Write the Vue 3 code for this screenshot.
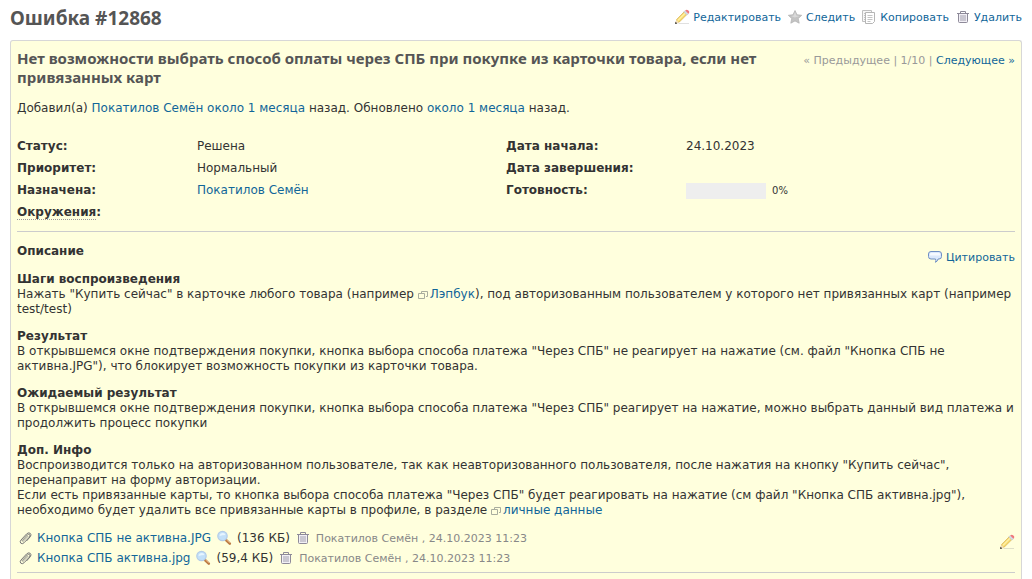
<script setup>
const attributesLeft = [
  { label: 'Статус', value: 'Решена' },
  { label: 'Приоритет', value: 'Нормальный' },
  { label: 'Назначена', value: 'Покатилов Семён', link: true },
  { label: 'Окружения', value: '', hint: true }
]
const attributesRight = [
  { label: 'Дата начала', value: '24.10.2023' },
  { label: 'Дата завершения', value: '' },
  { label: 'Готовность', progress: 0 }
]
const files = [
  { name: 'Кнопка СПБ не активна.JPG', size: '136 КБ' },
  { name: 'Кнопка СПБ активна.jpg', size: '59,4 КБ' }
]
</script>

<template>
  <svg class="symbols" width="0" height="0" aria-hidden="true">
    <symbol id="pencil" viewBox="0 0 16 16">
      <path d="M5 14h10v1H4z" fill="#999" opacity=".3" />
      <path d="M1.8 14.200 2.800 10.300 10.200 2.800l2.700 2.700L5.500 12.900z" fill="#f7dc6f" stroke="#d0a548" stroke-width=".6" />
      <path d="m4 11.400 7.200-7.200" stroke="#fff2b0" stroke-width="1.200" />
      <path d="M1.500 14.500 2.400 11l2.500 2.400z" fill="#f2dfc0" />
      <path d="m1 15 .6-2.200 1.700 1.600z" fill="#333" />
      <path d="m9.800 3 1.400-1.400 3.200 3.200L13 6.200z" fill="#d5dce6" stroke="#b3bac5" stroke-width=".4" />
      <path d="m11.200 1.600.8-.7q1-.6 2 .3l.9.900q.8 1 .1 1.900l-.6.800z" fill="#f0777c" />
    </symbol>
    <symbol id="star" viewBox="0 0 16 16">
      <path d="m8 1.500 2 4.300 4.700.5-3.500 3.200 1 4.700L8 11.900l-4.200 2.300 1-4.700-3.500-3.200L6 5.800z" fill="#c4c4c4" stroke="#b4b4b4" stroke-width=".8" />
      <path d="m8 3 1.300 3.400 3.500.5-5 1.600L4 6.900 6.700 6.400z" fill="#d9d9d9" />
    </symbol>
    <symbol id="copy" viewBox="0 0 16 16">
      <path d="M1.500 1.500h9v11h-9z" fill="#f7f7f7" stroke="#c0c0c0" />
      <path d="M3 4.500h2M3 6.500h1M3 8.500h1M3 10.500h1" stroke="#c5c5c5" />
      <path d="M4.500 3.500h9v9l-2 2h-7z" fill="#fff" stroke="#b5b5b5" />
      <path d="M6.500 6.500h5M6.500 8.500h5M6.500 10.500h5M6.500 12.500h3" stroke="#c4c4c4" />
    </symbol>
    <symbol id="trash" viewBox="0 0 16 16">
      <path d="M2 4.500h12M5.500 4V2.500h5V4" fill="none" stroke="#8e8a99" />
      <path d="M3.500 5v7.500q0 1 1 1h7q1 0 1-1V5" fill="#f2f0f6" stroke="#8e8a99" />
      <path d="M6 6v6M8 6v6M10 6v6" stroke="#9995a5" stroke-width=".9" />
    </symbol>
    <symbol id="comment" viewBox="0 0 16 16">
      <path d="M4 2.500h8q2.500 0 2.500 2.500v2.500q0 2.500-2.500 2.500h-1q0 2-2.500 3.300Q9.300 11.500 8.500 10H4q-2.500 0-2.500-2.500V5Q1.500 2.500 4 2.500z" fill="#dce9fb" stroke="#6f8fc4" />
      <path d="M4 4h8q1 0 1 1v1.500H3V5q0-1 1-1z" fill="#f6faff" />
    </symbol>
    <symbol id="clip" viewBox="0 0 16 16">
      <path d="m5 10.800 5.500-6q1.300-1.100 2.200 0 .8 1-.2 2.200L7 12.800q-1.800 1.600-3.200.4-1.400-1.300.2-3.200l5.500-6q1.800-1.800 3.600-.8 1.800 1.500.2 3.500L9.500 11" fill="none" stroke="#777" stroke-width="1" />
      <path d="m5.500 12 5.800-6" stroke="#888" stroke-width=".8" />
    </symbol>
    <symbol id="magnifier" viewBox="0 0 16 16">
      <path d="m10 10 3.800 3.600" stroke="#bb7942" stroke-width="2.600" stroke-linecap="round" />
      <path d="m10.500 9.800 3.300 3" stroke="#eab98a" stroke-width=".9" />
      <circle cx="6.500" cy="6" r="4.700" fill="#c3e0f9" stroke="#b4cce8" stroke-width="1.200" />
      <path d="M3.500 6q.3-3 3.500-3 2 .2 2.500 2-3 0-6 1z" fill="#e7f5ff" />
    </symbol>
    <symbol id="external" viewBox="0 0 10 10">
      <path d="M3.500 3V1.500h6v5H8M.5 3.500h6v5h-6z" fill="none" stroke="#a9ad9e" />
    </symbol>
  </svg>

  <main class="page">
    <header class="top">
      <h2>Ошибка #12868</h2>
      <nav class="actions" aria-label="Действия">
        <a href="#"><svg class="icon"><use href="#pencil" /></svg>Редактировать</a>
        <a href="#"><svg class="icon"><use href="#star" /></svg>Следить</a>
        <a href="#"><svg class="icon"><use href="#copy" /></svg>Копировать</a>
        <a href="#"><svg class="icon"><use href="#trash" /></svg>Удалить</a>
      </nav>
    </header>

    <article class="issue">
      <div class="subject">
        <h3>Нет возможности выбрать способ оплаты через СПБ при покупке из карточки товара, если нет привязанных карт</h3>
        <nav class="pager" aria-label="Задачи">« Предыдущее | 1/10 | <a href="#">Следующее »</a></nav>
      </div>
      <p class="author">Добавил(а) <a href="#">Покатилов Семён</a> <a href="#">около 1 месяца</a> назад. Обновлено <a href="#">около 1 месяца</a> назад.</p>

      <div class="attributes">
        <dl v-for="(list, i) in [attributesLeft, attributesRight]" :key="i">
          <div v-for="item in list" :key="item.label" class="attribute">
            <dt><span :class="{ hint: item.hint }">{{ item.label }}</span>:</dt>
            <dd v-if="item.progress !== undefined" class="progress">
              <span class="bar"><span class="done" :style="{ width: item.progress + '%' }"></span></span>
              <span class="percent">{{ item.progress }}%</span>
            </dd>
            <dd v-else-if="item.link"><a href="#">{{ item.value }}</a></dd>
            <dd v-else>{{ item.value }}</dd>
          </div>
        </dl>
      </div>

      <hr />

      <section class="description">
        <div class="section-head">
          <strong>Описание</strong>
          <a class="quote" href="#"><svg class="icon"><use href="#comment" /></svg>Цитировать</a>
        </div>
        <p><strong>Шаги воспроизведения</strong><br />Нажать "Купить сейчас" в карточке любого товара (например <a href="#"><svg class="ext"><use href="#external" /></svg>Лэпбук</a>), под авторизованным пользователем у которого нет привязанных карт (например test/test)</p>
        <p><strong>Результат</strong><br />В открывшемся окне подтверждения покупки, кнопка выбора способа платежа "Через СПБ" не реагирует на нажатие (см. файл "Кнопка СПБ не активна.JPG"), что блокирует возможность покупки из карточки товара.</p>
        <p><strong>Ожидаемый результат</strong><br />В открывшемся окне подтверждения покупки, кнопка выбора способа платежа "Через СПБ" реагирует на нажатие, можно выбрать данный вид платежа и продолжить процесс покупки</p>
        <p><strong>Доп. Инфо</strong><br />Воспроизводится только на авторизованном пользователе, так как неавторизованного пользователя, после нажатия на кнопку "Купить сейчас", перенаправит на форму авторизации.<br />Если есть привязанные карты, то кнопка выбора способа платежа "Через СПБ" будет реагировать на нажатие (см файл "Кнопка СПБ активна.jpg"), необходимо будет удалить все привязанные карты в профиле, в разделе <a href="#"><svg class="ext"><use href="#external" /></svg>личные данные</a></p>
      </section>

      <section class="attachments">
        <ul>
          <li v-for="file in files" :key="file.name">
            <a class="file" href="#"><svg class="icon"><use href="#clip" /></svg>{{ file.name }}</a>
            <a class="view" href="#" aria-label="Просмотр"><svg class="icon"><use href="#magnifier" /></svg></a>
            <span>({{ file.size }})</span>
            <a class="remove" href="#" aria-label="Удалить файл"><svg class="icon"><use href="#trash" /></svg></a>
            <span class="meta">Покатилов Семён , 24.10.2023 11:23</span>
          </li>
        </ul>
        <a class="edit" href="#" aria-label="Редактировать файлы"><svg class="icon"><use href="#pencil" /></svg></a>
      </section>
      <hr />
    </article>
  </main>
</template>

<style>
body {
  margin: 0;
  background: #fff;
  overflow: hidden;
}
</style>

<style scoped>
.symbols {
  position: absolute;
}
.page {
  box-sizing: border-box;
  display: flex;
  flex-direction: column;
  min-height: 100vh;
  padding: 0 10px;
  font-family: Verdana, "DejaVu Sans", sans-serif;
  font-size: 12px;
  line-height: 15px;
  color: #333;
}
a {
  color: #169;
  text-decoration: none;
}
a:hover {
  text-decoration: underline;
}
h2,
h3,
p,
dl,
dd,
ul {
  margin: 0;
  padding: 0;
}
.icon {
  width: 16px;
  height: 16px;
  flex: none;
}
.top {
  display: flex;
  justify-content: space-between;
  height: 40px;
}
h2,
h3 {
  font-family: "Trebuchet MS", "Noto Sans", sans-serif;
  font-weight: 700;
  color: #555;
}
h2 {
  padding-top: 6px;
  font-size: 19px;
  line-height: 24px;
}
.actions {
  display: flex;
  gap: 6px;
  padding-top: 9px;
  font-size: 11px;
}
.actions a,
.quote {
  display: flex;
  align-items: center;
  gap: 3px;
  height: 16px;
  white-space: nowrap;
}
.issue {
  flex: 1;
  padding: 8px 6px 12px;
  background: #ffffdd;
  border: 1px solid #d7d7d7;
  border-bottom: 0;
  border-radius: 3px 3px 0 0;
}
.subject {
  display: flex;
  justify-content: space-between;
  align-items: flex-start;
  gap: 24px;
}
h3 {
  font-size: 15px;
  line-height: 19px;
}
.pager {
  padding-top: 4px;
  font-size: 11px;
  color: #999;
  white-space: nowrap;
}
.author {
  margin-top: 14px;
}
.attributes {
  display: flex;
  margin-top: 23px;
}
dl {
  width: 49%;
}
.attribute {
  display: flex;
  height: 22px;
}
dt {
  width: 180px;
  font-weight: 700;
}
.hint {
  border-bottom: 1px dotted #999;
}
.progress {
  display: flex;
  gap: 6px;
}
.bar {
  width: 80px;
  height: 16px;
  background: #eee;
}
.done {
  display: block;
  height: 16px;
  background: #bae0ba;
}
.percent {
  font-size: 10px;
}
hr {
  height: 1px;
  margin: 4px 0 0;
  border: 0;
  background: #ccc;
}
.section-head {
  display: flex;
  justify-content: space-between;
  padding-top: 12px;
  height: 28px;
}
.quote {
  font-size: 11px;
  margin-top: 5px;
}
.description p {
  margin-bottom: 12px;
}
.description p:last-child {
  margin-bottom: 10px;
}
.ext {
  width: 10px;
  height: 10px;
  margin-right: 2px;
  vertical-align: -2px;
}
.attachments {
  display: flex;
  justify-content: space-between;
  align-items: flex-start;
}
ul {
  list-style: none;
}
li {
  display: flex;
  align-items: center;
  gap: 5px;
  height: 20px;
  white-space: nowrap;
}
.file,
.view,
.remove,
.edit {
  display: flex;
  align-items: center;
  gap: 4px;
}
.edit {
  padding-top: 6px;
}
.meta {
  font-size: 11px;
  color: #888;
}
</style>
